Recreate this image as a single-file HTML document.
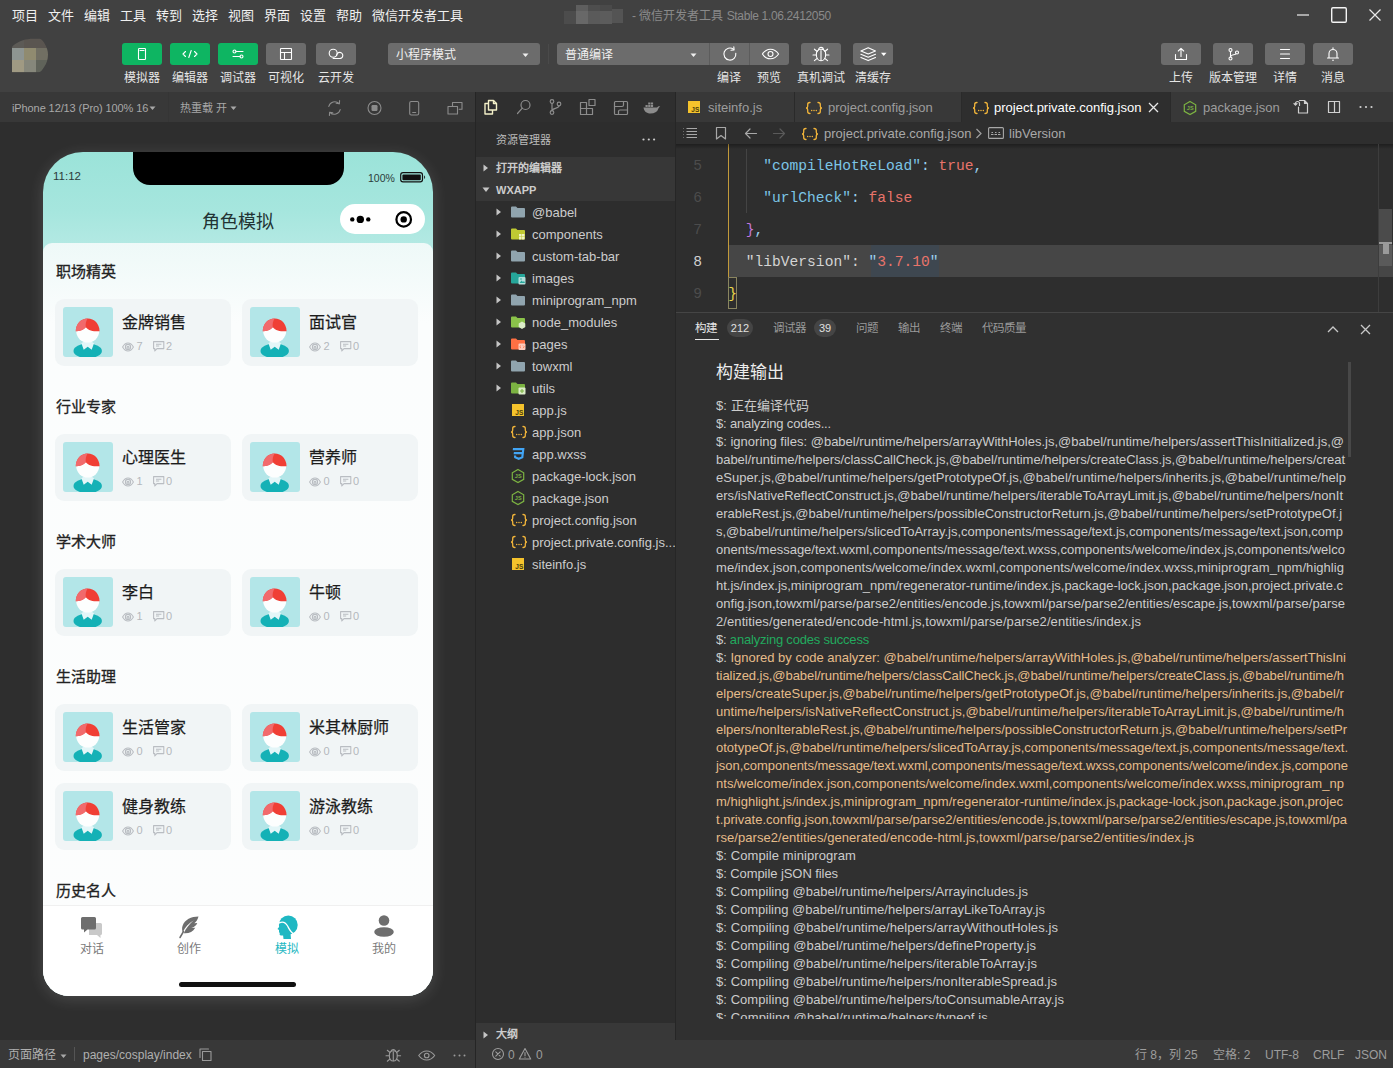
<!DOCTYPE html><html lang="zh-CN"><head><meta charset="utf-8"><title>wx</title><style>
*{box-sizing:border-box;margin:0;padding:0}
svg{display:block}
html,body{width:1393px;height:1068px;overflow:hidden;background:#2e2e2e;font-family:"Liberation Sans",sans-serif;color:#ccc;font-size:12px}
.abs{position:absolute}
.nw{white-space:nowrap}
#menubar{left:0;top:0;width:1393px;height:30px;background:#414141}
#toolbar{left:0;top:30px;width:1393px;height:62px;background:#414141}
.menu{position:absolute;top:8px;font-size:13px;color:#f0f0f0;white-space:nowrap;line-height:16px}
.tbtn{position:absolute;top:43px;width:40px;height:22px;border-radius:3px;background:#6c6c6c}
.tbtn.g{background:#0eb562}
.tbtn svg{position:absolute;left:0;top:0}
.tlab{position:absolute;top:71px;font-size:12px;color:#e6e6e6;white-space:nowrap;line-height:15px;text-align:center;width:80px}
.dd{position:absolute;top:43px;height:22px;background:#6c6c6c;border-radius:3px;color:#f0f0f0;font-size:12px;line-height:24px;padding-left:8px;white-space:nowrap}
#sim{left:0;top:92px;width:475px;height:948px;background:#2e2e2e}
#simbar{left:0;top:92px;width:475px;height:30px;background:#383838}
#simbot{left:0;top:1040px;width:475px;height:28px;background:#383838}
#vdiv{left:475px;top:92px;width:1px;height:976px;background:#252525}
#actbar{left:476px;top:92px;width:200px;height:30px;background:#2f2f2f}
#explorer{left:476px;top:122px;width:199px;height:918px;background:#2d2d2d;overflow:hidden}
#edtabs{left:676px;top:92px;width:717px;height:30px;background:#383838}
#crumbs{left:676px;top:122px;width:717px;height:22px;background:#2e2e2e}
#code{left:676px;top:144px;width:717px;height:168px;background:#2e2e2e;overflow:hidden}
#panel{left:676px;top:310px;width:717px;height:730px}
#panelbg{left:676px;top:312px;width:717px;height:728px;background:#303030;border-top:1px solid #454545}
#status{left:476px;top:1040px;width:917px;height:28px;background:#393939}
.row{position:absolute;left:0;width:200px;height:22px;line-height:22px;font-size:13px;color:#cccccc;white-space:nowrap}
.row .tw{position:absolute;top:7px}
.row .ic{position:absolute;top:3px}
.row .lb{position:absolute;left:56px;top:1px}
.sec{position:absolute;left:0;width:199px;height:22px;background:#373737;line-height:22px;font-size:11px;font-weight:bold;color:#cccccc}
.tab{position:absolute;top:0;height:30px;line-height:32px;font-size:13px;color:#9d9d9d;white-space:nowrap;border-right:1px solid #2a2a2a}
.tab.act{background:#2e2e2e;color:#ffffff}
.cl{position:absolute;left:0;width:717px;height:32px;line-height:32px;font-family:"Liberation Mono",monospace;font-size:14.6px;white-space:pre;color:#cfcfcf}
.ln{position:absolute;left:0;width:26px;text-align:right;color:#4c4c4c;font-family:"Liberation Mono",monospace;font-size:14.6px;line-height:32px}
.k{color:#7cc5e6}.s{color:#e8746b}.p{color:#9ad0ec}.b2{color:#c678dd}.b1{color:#ead84a}
.ptab{position:absolute;top:11px;font-size:11.5px;line-height:14px;color:#9a9a9a;white-space:nowrap}
.badge{position:absolute;top:9px;height:18px;border-radius:9px;background:#454545;color:#e0e0e0;font-size:11px;line-height:18px;text-align:center}
.log{position:absolute;left:40px;height:18px;line-height:18px;font-size:13px;color:#cccccc;white-space:nowrap}
.log.o{color:#e6bc8a}
.sb{position:absolute;top:8px;font-size:12px;line-height:14px;color:#9d9d9d;white-space:nowrap}
/* phone */
#phone{left:43px;top:152px;width:390px;height:844px;border-radius:40px 40px 26px 26px;overflow:hidden;background:linear-gradient(180deg,#9be3d9 0px,#a6e6de 60px,#b3e9e3 92px,#b3e9e3 100px);box-shadow:0 3px 16px rgba(255,255,255,.14)}
#notch{left:89.5px;top:0;width:211px;height:33px;background:#000;border-radius:0 0 17px 17px}
#content{left:0;top:91px;width:390px;height:753px;border-radius:9px 9px 0 0;background:linear-gradient(180deg,#eef9f8 0px,#fbfdfd 80px,#fcfdfd 100%)}
.st{position:absolute;left:13px;font-size:15px;line-height:18px;color:#222;font-weight:500;-webkit-text-stroke:0.3px #222;white-space:nowrap}
.card{position:absolute;width:176px;height:67px;border-radius:9px;background:#f1f5f6}
.card .av{position:absolute;left:8px;top:8px;width:50px;height:50px;border-radius:3px;background:#b3e6e8;overflow:hidden}
.card .nm{position:absolute;left:67px;top:13px;font-size:16px;line-height:22px;color:#1c1c1c;font-weight:500;-webkit-text-stroke:0.25px #1c1c1c;white-space:nowrap}
.card .stt{position:absolute;left:67px;top:40px;font-size:11px;line-height:14px;color:#b4b8bd;white-space:nowrap}
#tabbar{left:0;top:753px;width:390px;height:91px;background:#fff;border-top:1px solid #f0f0f0}
.tbl{position:absolute;top:35px;width:60px;text-align:center;font-size:12px;line-height:16px;color:#7a7a7a}
</style></head><body>
<div id="menubar" class="abs"><div class="menu" style="left:12px">项目</div><div class="menu" style="left:48px">文件</div><div class="menu" style="left:84px">编辑</div><div class="menu" style="left:120px">工具</div><div class="menu" style="left:156px">转到</div><div class="menu" style="left:192px">选择</div><div class="menu" style="left:228px">视图</div><div class="menu" style="left:264px">界面</div><div class="menu" style="left:300px">设置</div><div class="menu" style="left:336px">帮助</div><div class="menu" style="left:372px">微信开发者工具</div>
<svg width="64" height="22" style="position:absolute;left:562px;top:3px;filter:blur(0.6px)"><rect x="2" y="8" width="12" height="13" fill="#4c4c4c"/><rect x="14" y="2" width="12" height="19" fill="#5e5e5e"/><rect x="14" y="8" width="12" height="13" fill="#686868"/><rect x="26" y="2" width="12" height="7" fill="#4e4e4e"/><rect x="26" y="8" width="12" height="13" fill="#5a5a5a"/><rect x="38" y="2" width="12" height="7" fill="#4a4a4a"/><rect x="38" y="8" width="12" height="13" fill="#5c5c5c"/><rect x="50" y="6" width="11" height="14" fill="#545454"/></svg>
<div class="menu" style="left:632px;color:#8a8a8a;font-size:12px">- 微信开发者工具 <span style="letter-spacing:-0.35px">Stable 1.06.2412050</span></div>
<svg width="100" height="30" style="position:absolute;left:1290px;top:0"><path d="M7 15h12" stroke="#a8a8a8" stroke-width="2"/><rect x="41.700" y="7.700" width="14.600" height="14.600" rx="1.200" fill="none" stroke="#f4f4f4" stroke-width="1.400"/><path d="M79.500 9.500l11 11M90.500 9.500l-11 11" stroke="#e8e8e8" stroke-width="1.200"/></svg>
</div>
<div id="toolbar" class="abs"></div>
<svg width="40" height="36" style="position:absolute;left:11px;top:38px;filter:blur(0.4px)"><defs><clipPath id="avc"><path d="M1 9.500c0-1.500 5-5.500 11-7.200 3-1 6-1.500 11-1.500h5.500c2 0 4.500 3 6 6.500 1.300 3 2.500 5 2.500 9.500 0 5-1.500 9-4 12.500-1.500 2.500-3.500 5-5 5h-27z"/></clipPath></defs><g clip-path="url(#avc)"><rect x="0" y="0" width="13" height="10" fill="#5c5a56"/><rect x="13" y="0" width="27" height="10" fill="#5a5550"/><rect x="1" y="10" width="12" height="12" fill="#8e9592"/><rect x="13" y="10" width="12" height="12" fill="#908b70"/><rect x="25" y="10" width="15" height="12" fill="#716f63"/><rect x="1" y="22" width="12" height="12.500" fill="#a09a83"/><rect x="13" y="22" width="12" height="12.500" fill="#86877b"/><rect x="25" y="22" width="15" height="12.500" fill="#60635a"/></g></svg>
<div class="tbtn g" style="left:122px"><svg width="40" height="22" viewBox="0 0 40 22" style=""><rect x="16.5" y="5.5" width="7" height="11" rx="0.8" fill="none" stroke="#fff" stroke-width="1.1" stroke-linecap="round" stroke-linejoin="round"/><path d="M18 7.5h4" fill="none" stroke="#fff" stroke-width="1.1" stroke-linecap="round" stroke-linejoin="round"/></svg></div><div class="tlab" style="left:102px">模拟器</div>
<div class="tbtn g" style="left:170px"><svg width="40" height="22" viewBox="0 0 40 22" style=""><path d="M15.5 8.5l-2.5 2.5 2.5 2.5M24.5 8.5l2.5 2.5-2.5 2.5M21.2 7.5l-2.4 7" fill="none" stroke="#fff" stroke-width="1.1" stroke-linecap="round" stroke-linejoin="round"/></svg></div><div class="tlab" style="left:150px">编辑器</div>
<div class="tbtn g" style="left:218px"><svg width="40" height="22" viewBox="0 0 40 22" style=""><path d="M18 8.5h7M15 13.5h7" fill="none" stroke="#fff" stroke-width="1.1" stroke-linecap="round" stroke-linejoin="round"/><circle cx="16.5" cy="8.5" r="1.5" fill="none" stroke="#fff" stroke-width="1.1" stroke-linecap="round" stroke-linejoin="round"/><circle cx="23.5" cy="13.5" r="1.5" fill="none" stroke="#fff" stroke-width="1.1" stroke-linecap="round" stroke-linejoin="round"/></svg></div><div class="tlab" style="left:198px">调试器</div>
<div class="tbtn" style="left:266px"><svg width="40" height="22" viewBox="0 0 40 22" style=""><rect x="14.5" y="5.5" width="11" height="11" rx="0.5" fill="none" stroke="#fff" stroke-width="1.1" stroke-linecap="round" stroke-linejoin="round"/><path d="M14.5 9.5h11M18.5 9.5v7" fill="none" stroke="#fff" stroke-width="1.1" stroke-linecap="round" stroke-linejoin="round"/></svg></div><div class="tlab" style="left:246px">可视化</div>
<div class="tbtn" style="left:316px"><svg width="40" height="22" viewBox="0 0 40 22" style=""><circle cx="17.200" cy="10.300" r="4" fill="none" stroke="#fff" stroke-width="1.1" stroke-linecap="round" stroke-linejoin="round"/><path d="M20.600 12.400a3.100 3.100 0 1 1 2.500 3.100h-6" fill="none" stroke="#fff" stroke-width="1.1" stroke-linecap="round" stroke-linejoin="round"/></svg></div><div class="tlab" style="left:296px">云开发</div>
<div class="dd" style="left:388px;width:152px">小程序模式<svg width="7" height="5" style="position:absolute;left:134px;top:10px"><path d="M0.500 0.500h6l-3 3.500z" fill="#eee"/></svg></div>
<div class="abs" style="left:548px;top:44px;width:1px;height:20px;background:#4a4a4a"></div>
<div class="dd" style="left:557px;width:232px;">普通编译<svg width="7" height="5" style="position:absolute;left:133px;top:10px"><path d="M0.500 0.500h6l-3 3.500z" fill="#eee"/></svg><div class="abs" style="left:152px;top:0;width:1px;height:22px;background:#5c5c5c"></div><div class="abs" style="left:192px;top:0;width:1px;height:22px;background:#5c5c5c"></div><svg width="40" height="22" viewBox="0 0 40 22" style="position:absolute;left:153px;top:0"><path d="M25.800 10.200a6 6 0 1 1-2.300-3.900" fill="none" stroke="#fff" stroke-width="1.1" stroke-linecap="round" stroke-linejoin="round"/><path d="M23.800 3.800l.3 3.100-3.100.3" fill="none" stroke="#fff" stroke-width="1.1" stroke-linecap="round" stroke-linejoin="round"/></svg><svg width="40" height="22" viewBox="0 0 40 22" style="position:absolute;left:193px;top:0"><path d="M12.400 11c2.200-3.200 4.900-4.800 8.100-4.800s5.900 1.600 8.100 4.800c-2.200 3.200-4.900 4.800-8.100 4.800s-5.900-1.600-8.100-4.800z" fill="none" stroke="#fff" stroke-width="1.1" stroke-linecap="round" stroke-linejoin="round"/><circle cx="20.500" cy="11" r="2.500" fill="none" stroke="#fff" stroke-width="1.1" stroke-linecap="round" stroke-linejoin="round"/></svg></div>
<div class="tlab" style="left:689px">编译</div><div class="tlab" style="left:729px">预览</div>
<div class="tbtn" style="left:801px"><svg width="40" height="22" viewBox="0 0 40 22" style=""><path d="M15.300 11.500c0-3.200 2-5.200 4.700-5.200s4.700 2 4.700 5.200c0 3.600-2 6.300-4.700 6.300s-4.700-2.700-4.700-6.300z" fill="none" stroke="#fff" stroke-width="1.1" stroke-linecap="round" stroke-linejoin="round"/><path d="M20 7.500v10M15.300 12h-3.300M24.700 12h3.300M16.200 8.500l-2.800-2.300M23.800 8.500l2.800-2.300M16.200 15.300l-2.800 2.400M23.800 15.300l2.800 2.400M17.600 6.800a2.400 2.400 0 0 1 4.800 0" fill="none" stroke="#fff" stroke-width="1.1" stroke-linecap="round" stroke-linejoin="round"/></svg></div><div class="tlab" style="left:781px">真机调试</div>
<div class="tbtn" style="left:853px"><svg width="40" height="22" viewBox="0 0 40 22" style=""><path d="M15.200 4.800l7.300 3.100-7.300 3.100-7.300-3.100z M7.900 11.200l7.300 3.100 7.300-3.100 M7.900 14.500l7.300 3.100 7.300-3.100" fill="none" stroke="#fff" stroke-width="1.1" stroke-linecap="round" stroke-linejoin="round"/><path d="M28 9.800h5.500l-2.750 3.200z" fill="#fff"/></svg></div><div class="tlab" style="left:833px">清缓存</div>
<div class="tbtn" style="left:1161px"><svg width="40" height="22" viewBox="0 0 40 22" style=""><path d="M14.500 11.500v5h11v-5M20 13.500v-8M17.300 8l2.700-2.700 2.700 2.700" fill="none" stroke="#fff" stroke-width="1.1" stroke-linecap="round" stroke-linejoin="round"/></svg></div><div class="tlab" style="left:1141px">上传</div>
<div class="tbtn" style="left:1213px"><svg width="40" height="22" viewBox="0 0 40 22" style=""><circle cx="17.500" cy="7" r="1.500" fill="none" stroke="#fff" stroke-width="1.1" stroke-linecap="round" stroke-linejoin="round"/><circle cx="17.500" cy="15.500" r="1.500" fill="none" stroke="#fff" stroke-width="1.1" stroke-linecap="round" stroke-linejoin="round"/><circle cx="24" cy="9.500" r="1.500" fill="none" stroke="#fff" stroke-width="1.1" stroke-linecap="round" stroke-linejoin="round"/><path d="M17.500 8.500v5.500M17.500 14c0-3 5-1.500 5.500-3.300" fill="none" stroke="#fff" stroke-width="1.1" stroke-linecap="round" stroke-linejoin="round"/></svg></div><div class="tlab" style="left:1193px">版本管理</div>
<div class="tbtn" style="left:1265px"><svg width="40" height="22" viewBox="0 0 40 22" style=""><path d="M15.500 6.500h9M15.500 11h9M15.500 15.500h9" fill="none" stroke="#fff" stroke-width="1.1" stroke-linecap="round" stroke-linejoin="round"/></svg></div><div class="tlab" style="left:1245px">详情</div>
<div class="tbtn" style="left:1313px"><svg width="40" height="22" viewBox="0 0 40 22" style=""><path d="M14.500 15h11M16 15v-4.500a4 4 0 0 1 8 0v4.500M20 4.700v1.500" fill="none" stroke="#fff" stroke-width="1.1" stroke-linecap="round" stroke-linejoin="round"/><circle cx="20" cy="17.200" r="0.800" fill="#fff"/></svg></div><div class="tlab" style="left:1293px">消息</div>
<div id="sim" class="abs"></div><div id="simbar" class="abs">
<div class="abs nw" style="left:12px;top:9px;font-size:11px;line-height:14px;color:#a8a8a8;letter-spacing:-0.1px">iPhone 12/13 (Pro) 100% 16</div><svg width="7" height="5" style="position:absolute;left:149px;top:14px"><path d="M0.500 0.500h6l-3 3.500z" fill="#a8a8a8"/></svg>
<div class="abs" style="left:168px;top:0;width:1px;height:30px;background:#353535"></div>
<div class="abs nw" style="left:180px;top:9px;font-size:11px;line-height:14px;color:#a8a8a8">热重载 开</div><svg width="7" height="5" style="position:absolute;left:230px;top:14px"><path d="M0.500 0.500h6l-3 3.500z" fill="#a8a8a8"/></svg>
<svg width="160" height="30" style="position:absolute;left:315px;top:0"><path d="M13.800 14.500a6 6 0 0 1 10.300-2.800M25.200 17.500a6 6 0 0 1-10.300 2.800" fill="none" stroke="#8c8c8c" stroke-width="1.100" stroke-linecap="round" stroke-linejoin="round"/><path d="M24.600 8.600l-.3 3.200-3.100-.5M14.400 23.400l.3-3.200 3.100.5" fill="none" stroke="#8c8c8c" stroke-width="1.100" stroke-linecap="round" stroke-linejoin="round"/><circle cx="59.500" cy="16" r="6.500" fill="none" stroke="#8c8c8c" stroke-width="1.100" stroke-linecap="round" stroke-linejoin="round"/><rect x="56.500" y="13" width="6" height="6" rx="1.200" fill="#8c8c8c"/><rect x="94.700" y="9.500" width="9" height="13.500" rx="1.500" fill="none" stroke="#8c8c8c" stroke-width="1.100" stroke-linecap="round" stroke-linejoin="round"/><path d="M97.700 20.500h3" fill="none" stroke="#8c8c8c" stroke-width="1.100" stroke-linecap="round" stroke-linejoin="round"/><path d="M137.500 13.800v-3.300h9.500v6.800h-2.800M133 14.500h9.500v7.500h-9.500z" fill="none" stroke="#8c8c8c" stroke-width="1.100" stroke-linecap="round" stroke-linejoin="round"/></svg>
</div>
<div id="simbot" class="abs">
<div class="sb" style="left:8px;color:#b0b0b0">页面路径</div><svg width="7" height="5" style="position:absolute;left:60px;top:14px"><path d="M0.500 0.500h6l-3 3.500z" fill="#a8a8a8"/></svg><div style="display:none"></div><div class="abs" style="left:74px;top:7px;width:1px;height:14px;background:#555"></div><div class="sb" style="left:83px;color:#b0b0b0">pages/cosplay/index</div>
<svg width="280" height="28" style="position:absolute;left:195px;top:0"><path d="M7.500 11.500h8.500v9h-8.500z M5 17.500v-8.500h8.500" fill="none" stroke="#9a9a9a" stroke-width="1.100" stroke-linecap="round" stroke-linejoin="round"/><path d="M194.300 15.500c0-3 1.700-4.800 4-4.800s4 1.800 4 4.800c0 3.200-1.700 5.500-4 5.500s-4-2.300-4-5.500z" fill="none" stroke="#9a9a9a" stroke-width="1.100" stroke-linecap="round" stroke-linejoin="round"/><path d="M198.300 11.800v9M194.300 15.800h-3.300M202.300 15.800h3.300M195 12.500l-2.700-2.200M201.600 12.500l2.700-2.200M195 19l-2.700 2.200M201.600 19l2.700 2.200M196.200 11a2.200 2.200 0 0 1 4.200 0" fill="none" stroke="#9a9a9a" stroke-width="1.100" stroke-linecap="round" stroke-linejoin="round"/><path d="M223.700 15.500c2.200-3 4.900-4.500 8-4.500s5.800 1.500 8 4.500c-2.200 3-4.900 4.500-8 4.500s-5.800-1.500-8-4.500z" fill="none" stroke="#9a9a9a" stroke-width="1.100" stroke-linecap="round" stroke-linejoin="round"/><circle cx="231.700" cy="15.500" r="2.300" fill="none" stroke="#9a9a9a" stroke-width="1.100" stroke-linecap="round" stroke-linejoin="round"/><circle cx="259.500" cy="15.500" r="1" fill="#9a9a9a"/><circle cx="264.500" cy="15.500" r="1" fill="#9a9a9a"/><circle cx="269.500" cy="15.500" r="1" fill="#9a9a9a"/></svg>
</div>
<div id="vdiv" class="abs"></div>
<div id="phone" class="abs"><div id="notch" class="abs"></div>
<div class="abs nw" style="left:10px;top:17px;font-size:11.5px;line-height:15px;color:#2b3b3a">11:12</div>
<div class="abs nw" style="left:325px;top:19.5px;font-size:10.5px;line-height:13px;color:#2b3b3a">100%</div>
<svg width="28" height="12" style="position:absolute;left:357px;top:20px"><rect x="0.700" y="0.700" width="21.800" height="9.200" rx="2.300" fill="none" stroke="#111" stroke-width="1.200"/><rect x="2.400" y="2.400" width="18.400" height="5.800" rx="1" fill="#111"/><path d="M24.200 3.600v3.400c1.200-.3 1.200-3.100 0-3.400z" fill="#111"/></svg>
<div class="abs nw" style="left:0;top:58px;width:390px;text-align:center;font-size:18px;line-height:24px;color:#233">角色模拟</div>
<div class="abs" style="left:297px;top:52px;width:85px;height:30px;border-radius:15px;background:#fff"><svg width="85" height="30" style="position:absolute;left:0;top:0"><circle cx="12.300" cy="15.400" r="2.200" fill="#000"/><circle cx="20.300" cy="15.400" r="3.700" fill="#000"/><circle cx="28.300" cy="15.400" r="2.200" fill="#000"/><circle cx="63.700" cy="15.400" r="7.300" fill="none" stroke="#000" stroke-width="2.200"/><circle cx="63.700" cy="15.400" r="3.200" fill="#000"/></svg></div>
<div id="content" class="abs">
<div class="st" style="top:20px">职场精英</div>
<div class="card" style="left:12px;top:56px"><div class="av"><svg width="50" height="50" viewBox="0 0 50 50"><ellipse cx="24.700" cy="43.900" rx="14.200" ry="7.300" fill="#14b1b6"/><path d="M18.400 36.200l2.300 6.500 4-2.900 4 2.900 2.300-6.500-2.600-1.700h-7.400z" fill="#e4f6f8"/><circle cx="24.700" cy="24" r="11.500" fill="#fdfefe"/><path d="M12.800 24.300c0-7.300 5.300-12.700 11.900-12.700s11.900 5.400 11.900 12.700c-5.500.3-11-.6-13.800-4.100-2.200 2.700-6 4.100-10 4.100z" fill="#f03f35"/><path d="M12.800 24.300c0-7.300 5.300-12.700 11.900-12.700-1.800 2.800-2.400 5.700-1.900 8.600-2.200 2.700-6 4.100-10 4.100z" fill="#f16a6c"/></svg></div><div class="nm">金牌销售</div><div class="stt"><svg width="12" height="10" style="position:absolute;left:0;top:2.500px"><path d="M0.600 5c1.500-2.700 3.300-4 5.400-4s3.900 1.300 5.400 4c-1.500 2.700-3.300 4-5.400 4s-3.900-1.300-5.400-4z" fill="none" stroke="#b9bdc2" stroke-width="1.100" stroke-linejoin="round"/><circle cx="6" cy="5" r="2.600" fill="none" stroke="#b9bdc2" stroke-width="1.100" stroke-linejoin="round"/><circle cx="6" cy="5.200" r="1" fill="none" stroke="#b9bdc2" stroke-width="1.100" stroke-linejoin="round"/></svg><span style="position:absolute;left:14.500px;top:0">7</span><svg width="12" height="11" style="position:absolute;left:30.500px;top:2px"><path d="M0.600 0.600h10.200v7h-6.800l-2.200 2.400v-2.400h-1.200z" fill="none" stroke="#b9bdc2" stroke-width="1.100" stroke-linejoin="round"/><path d="M3 3.200h5.400M3 5h3.200" fill="none" stroke="#b9bdc2" stroke-width="1.100" stroke-linejoin="round"/></svg><span style="position:absolute;left:44px;top:0">2</span></div></div>
<div class="card" style="left:199px;top:56px"><div class="av"><svg width="50" height="50" viewBox="0 0 50 50"><ellipse cx="24.700" cy="43.900" rx="14.200" ry="7.300" fill="#14b1b6"/><path d="M18.400 36.200l2.300 6.500 4-2.900 4 2.900 2.300-6.500-2.600-1.700h-7.400z" fill="#e4f6f8"/><circle cx="24.700" cy="24" r="11.500" fill="#fdfefe"/><path d="M12.800 24.300c0-7.300 5.300-12.700 11.900-12.700s11.900 5.400 11.900 12.700c-5.500.3-11-.6-13.800-4.100-2.200 2.700-6 4.100-10 4.100z" fill="#f03f35"/><path d="M12.800 24.300c0-7.300 5.300-12.700 11.900-12.700-1.800 2.800-2.400 5.700-1.900 8.600-2.200 2.700-6 4.100-10 4.100z" fill="#f16a6c"/></svg></div><div class="nm">面试官</div><div class="stt"><svg width="12" height="10" style="position:absolute;left:0;top:2.500px"><path d="M0.600 5c1.500-2.700 3.300-4 5.400-4s3.900 1.300 5.400 4c-1.500 2.700-3.300 4-5.400 4s-3.900-1.300-5.400-4z" fill="none" stroke="#b9bdc2" stroke-width="1.100" stroke-linejoin="round"/><circle cx="6" cy="5" r="2.600" fill="none" stroke="#b9bdc2" stroke-width="1.100" stroke-linejoin="round"/><circle cx="6" cy="5.200" r="1" fill="none" stroke="#b9bdc2" stroke-width="1.100" stroke-linejoin="round"/></svg><span style="position:absolute;left:14.500px;top:0">2</span><svg width="12" height="11" style="position:absolute;left:30.500px;top:2px"><path d="M0.600 0.600h10.200v7h-6.800l-2.200 2.400v-2.400h-1.200z" fill="none" stroke="#b9bdc2" stroke-width="1.100" stroke-linejoin="round"/><path d="M3 3.200h5.400M3 5h3.200" fill="none" stroke="#b9bdc2" stroke-width="1.100" stroke-linejoin="round"/></svg><span style="position:absolute;left:44px;top:0">0</span></div></div>
<div class="st" style="top:155px">行业专家</div>
<div class="card" style="left:12px;top:191px"><div class="av"><svg width="50" height="50" viewBox="0 0 50 50"><ellipse cx="24.700" cy="43.900" rx="14.200" ry="7.300" fill="#14b1b6"/><path d="M18.400 36.200l2.300 6.500 4-2.900 4 2.900 2.300-6.500-2.600-1.700h-7.400z" fill="#e4f6f8"/><circle cx="24.700" cy="24" r="11.500" fill="#fdfefe"/><path d="M12.800 24.300c0-7.300 5.300-12.700 11.900-12.700s11.900 5.400 11.900 12.700c-5.500.3-11-.6-13.800-4.100-2.200 2.700-6 4.100-10 4.100z" fill="#f03f35"/><path d="M12.800 24.300c0-7.300 5.300-12.700 11.900-12.700-1.800 2.800-2.400 5.700-1.900 8.600-2.200 2.700-6 4.100-10 4.100z" fill="#f16a6c"/></svg></div><div class="nm">心理医生</div><div class="stt"><svg width="12" height="10" style="position:absolute;left:0;top:2.500px"><path d="M0.600 5c1.500-2.700 3.300-4 5.400-4s3.900 1.300 5.400 4c-1.500 2.700-3.300 4-5.400 4s-3.900-1.300-5.400-4z" fill="none" stroke="#b9bdc2" stroke-width="1.100" stroke-linejoin="round"/><circle cx="6" cy="5" r="2.600" fill="none" stroke="#b9bdc2" stroke-width="1.100" stroke-linejoin="round"/><circle cx="6" cy="5.200" r="1" fill="none" stroke="#b9bdc2" stroke-width="1.100" stroke-linejoin="round"/></svg><span style="position:absolute;left:14.500px;top:0">1</span><svg width="12" height="11" style="position:absolute;left:30.500px;top:2px"><path d="M0.600 0.600h10.200v7h-6.800l-2.200 2.400v-2.400h-1.200z" fill="none" stroke="#b9bdc2" stroke-width="1.100" stroke-linejoin="round"/><path d="M3 3.200h5.400M3 5h3.200" fill="none" stroke="#b9bdc2" stroke-width="1.100" stroke-linejoin="round"/></svg><span style="position:absolute;left:44px;top:0">0</span></div></div>
<div class="card" style="left:199px;top:191px"><div class="av"><svg width="50" height="50" viewBox="0 0 50 50"><ellipse cx="24.700" cy="43.900" rx="14.200" ry="7.300" fill="#14b1b6"/><path d="M18.400 36.200l2.300 6.500 4-2.900 4 2.900 2.300-6.500-2.600-1.700h-7.400z" fill="#e4f6f8"/><circle cx="24.700" cy="24" r="11.500" fill="#fdfefe"/><path d="M12.800 24.300c0-7.300 5.300-12.700 11.900-12.700s11.900 5.400 11.900 12.700c-5.500.3-11-.6-13.800-4.100-2.200 2.700-6 4.100-10 4.100z" fill="#f03f35"/><path d="M12.800 24.300c0-7.300 5.300-12.700 11.900-12.700-1.800 2.800-2.400 5.700-1.900 8.600-2.200 2.700-6 4.100-10 4.100z" fill="#f16a6c"/></svg></div><div class="nm">营养师</div><div class="stt"><svg width="12" height="10" style="position:absolute;left:0;top:2.500px"><path d="M0.600 5c1.500-2.700 3.300-4 5.400-4s3.900 1.300 5.400 4c-1.500 2.700-3.300 4-5.400 4s-3.900-1.300-5.400-4z" fill="none" stroke="#b9bdc2" stroke-width="1.100" stroke-linejoin="round"/><circle cx="6" cy="5" r="2.600" fill="none" stroke="#b9bdc2" stroke-width="1.100" stroke-linejoin="round"/><circle cx="6" cy="5.200" r="1" fill="none" stroke="#b9bdc2" stroke-width="1.100" stroke-linejoin="round"/></svg><span style="position:absolute;left:14.500px;top:0">0</span><svg width="12" height="11" style="position:absolute;left:30.500px;top:2px"><path d="M0.600 0.600h10.200v7h-6.800l-2.200 2.400v-2.400h-1.200z" fill="none" stroke="#b9bdc2" stroke-width="1.100" stroke-linejoin="round"/><path d="M3 3.200h5.400M3 5h3.200" fill="none" stroke="#b9bdc2" stroke-width="1.100" stroke-linejoin="round"/></svg><span style="position:absolute;left:44px;top:0">0</span></div></div>
<div class="st" style="top:290px">学术大师</div>
<div class="card" style="left:12px;top:326px"><div class="av"><svg width="50" height="50" viewBox="0 0 50 50"><ellipse cx="24.700" cy="43.900" rx="14.200" ry="7.300" fill="#14b1b6"/><path d="M18.400 36.200l2.300 6.500 4-2.900 4 2.900 2.300-6.500-2.600-1.700h-7.400z" fill="#e4f6f8"/><circle cx="24.700" cy="24" r="11.500" fill="#fdfefe"/><path d="M12.800 24.300c0-7.300 5.300-12.700 11.900-12.700s11.900 5.400 11.900 12.700c-5.500.3-11-.6-13.800-4.100-2.200 2.700-6 4.100-10 4.100z" fill="#f03f35"/><path d="M12.800 24.300c0-7.300 5.300-12.700 11.900-12.700-1.800 2.800-2.400 5.700-1.900 8.600-2.200 2.700-6 4.100-10 4.100z" fill="#f16a6c"/></svg></div><div class="nm">李白</div><div class="stt"><svg width="12" height="10" style="position:absolute;left:0;top:2.500px"><path d="M0.600 5c1.500-2.700 3.300-4 5.400-4s3.900 1.300 5.400 4c-1.500 2.700-3.300 4-5.400 4s-3.900-1.300-5.400-4z" fill="none" stroke="#b9bdc2" stroke-width="1.100" stroke-linejoin="round"/><circle cx="6" cy="5" r="2.600" fill="none" stroke="#b9bdc2" stroke-width="1.100" stroke-linejoin="round"/><circle cx="6" cy="5.200" r="1" fill="none" stroke="#b9bdc2" stroke-width="1.100" stroke-linejoin="round"/></svg><span style="position:absolute;left:14.500px;top:0">1</span><svg width="12" height="11" style="position:absolute;left:30.500px;top:2px"><path d="M0.600 0.600h10.200v7h-6.800l-2.200 2.400v-2.400h-1.200z" fill="none" stroke="#b9bdc2" stroke-width="1.100" stroke-linejoin="round"/><path d="M3 3.200h5.400M3 5h3.200" fill="none" stroke="#b9bdc2" stroke-width="1.100" stroke-linejoin="round"/></svg><span style="position:absolute;left:44px;top:0">0</span></div></div>
<div class="card" style="left:199px;top:326px"><div class="av"><svg width="50" height="50" viewBox="0 0 50 50"><ellipse cx="24.700" cy="43.900" rx="14.200" ry="7.300" fill="#14b1b6"/><path d="M18.400 36.200l2.300 6.500 4-2.900 4 2.900 2.300-6.500-2.600-1.700h-7.400z" fill="#e4f6f8"/><circle cx="24.700" cy="24" r="11.500" fill="#fdfefe"/><path d="M12.800 24.300c0-7.300 5.300-12.700 11.900-12.700s11.900 5.400 11.900 12.700c-5.500.3-11-.6-13.800-4.100-2.200 2.700-6 4.100-10 4.100z" fill="#f03f35"/><path d="M12.800 24.300c0-7.300 5.300-12.700 11.900-12.700-1.800 2.800-2.400 5.700-1.900 8.600-2.200 2.700-6 4.100-10 4.100z" fill="#f16a6c"/></svg></div><div class="nm">牛顿</div><div class="stt"><svg width="12" height="10" style="position:absolute;left:0;top:2.500px"><path d="M0.600 5c1.500-2.700 3.300-4 5.400-4s3.900 1.300 5.400 4c-1.500 2.700-3.300 4-5.400 4s-3.900-1.300-5.400-4z" fill="none" stroke="#b9bdc2" stroke-width="1.100" stroke-linejoin="round"/><circle cx="6" cy="5" r="2.600" fill="none" stroke="#b9bdc2" stroke-width="1.100" stroke-linejoin="round"/><circle cx="6" cy="5.200" r="1" fill="none" stroke="#b9bdc2" stroke-width="1.100" stroke-linejoin="round"/></svg><span style="position:absolute;left:14.500px;top:0">0</span><svg width="12" height="11" style="position:absolute;left:30.500px;top:2px"><path d="M0.600 0.600h10.200v7h-6.800l-2.200 2.400v-2.400h-1.200z" fill="none" stroke="#b9bdc2" stroke-width="1.100" stroke-linejoin="round"/><path d="M3 3.200h5.400M3 5h3.200" fill="none" stroke="#b9bdc2" stroke-width="1.100" stroke-linejoin="round"/></svg><span style="position:absolute;left:44px;top:0">0</span></div></div>
<div class="st" style="top:425px">生活助理</div>
<div class="card" style="left:12px;top:461px"><div class="av"><svg width="50" height="50" viewBox="0 0 50 50"><ellipse cx="24.700" cy="43.900" rx="14.200" ry="7.300" fill="#14b1b6"/><path d="M18.400 36.200l2.300 6.500 4-2.900 4 2.900 2.300-6.500-2.600-1.700h-7.400z" fill="#e4f6f8"/><circle cx="24.700" cy="24" r="11.500" fill="#fdfefe"/><path d="M12.800 24.300c0-7.300 5.300-12.700 11.900-12.700s11.900 5.400 11.900 12.700c-5.500.3-11-.6-13.800-4.100-2.200 2.700-6 4.100-10 4.100z" fill="#f03f35"/><path d="M12.800 24.300c0-7.300 5.300-12.700 11.900-12.700-1.800 2.800-2.400 5.700-1.900 8.600-2.200 2.700-6 4.100-10 4.100z" fill="#f16a6c"/></svg></div><div class="nm">生活管家</div><div class="stt"><svg width="12" height="10" style="position:absolute;left:0;top:2.500px"><path d="M0.600 5c1.500-2.700 3.300-4 5.400-4s3.900 1.300 5.400 4c-1.500 2.700-3.300 4-5.400 4s-3.900-1.300-5.400-4z" fill="none" stroke="#b9bdc2" stroke-width="1.100" stroke-linejoin="round"/><circle cx="6" cy="5" r="2.600" fill="none" stroke="#b9bdc2" stroke-width="1.100" stroke-linejoin="round"/><circle cx="6" cy="5.200" r="1" fill="none" stroke="#b9bdc2" stroke-width="1.100" stroke-linejoin="round"/></svg><span style="position:absolute;left:14.500px;top:0">0</span><svg width="12" height="11" style="position:absolute;left:30.500px;top:2px"><path d="M0.600 0.600h10.200v7h-6.800l-2.200 2.400v-2.400h-1.200z" fill="none" stroke="#b9bdc2" stroke-width="1.100" stroke-linejoin="round"/><path d="M3 3.200h5.400M3 5h3.200" fill="none" stroke="#b9bdc2" stroke-width="1.100" stroke-linejoin="round"/></svg><span style="position:absolute;left:44px;top:0">0</span></div></div>
<div class="card" style="left:199px;top:461px"><div class="av"><svg width="50" height="50" viewBox="0 0 50 50"><ellipse cx="24.700" cy="43.900" rx="14.200" ry="7.300" fill="#14b1b6"/><path d="M18.400 36.200l2.300 6.500 4-2.900 4 2.900 2.300-6.500-2.600-1.700h-7.400z" fill="#e4f6f8"/><circle cx="24.700" cy="24" r="11.500" fill="#fdfefe"/><path d="M12.800 24.300c0-7.300 5.300-12.700 11.900-12.700s11.900 5.400 11.900 12.700c-5.500.3-11-.6-13.800-4.100-2.200 2.700-6 4.100-10 4.100z" fill="#f03f35"/><path d="M12.800 24.300c0-7.300 5.300-12.700 11.900-12.700-1.800 2.800-2.400 5.700-1.900 8.600-2.200 2.700-6 4.100-10 4.100z" fill="#f16a6c"/></svg></div><div class="nm">米其林厨师</div><div class="stt"><svg width="12" height="10" style="position:absolute;left:0;top:2.500px"><path d="M0.600 5c1.500-2.700 3.300-4 5.400-4s3.900 1.300 5.400 4c-1.500 2.700-3.300 4-5.400 4s-3.900-1.300-5.400-4z" fill="none" stroke="#b9bdc2" stroke-width="1.100" stroke-linejoin="round"/><circle cx="6" cy="5" r="2.600" fill="none" stroke="#b9bdc2" stroke-width="1.100" stroke-linejoin="round"/><circle cx="6" cy="5.200" r="1" fill="none" stroke="#b9bdc2" stroke-width="1.100" stroke-linejoin="round"/></svg><span style="position:absolute;left:14.500px;top:0">0</span><svg width="12" height="11" style="position:absolute;left:30.500px;top:2px"><path d="M0.600 0.600h10.200v7h-6.800l-2.200 2.400v-2.400h-1.200z" fill="none" stroke="#b9bdc2" stroke-width="1.100" stroke-linejoin="round"/><path d="M3 3.200h5.400M3 5h3.200" fill="none" stroke="#b9bdc2" stroke-width="1.100" stroke-linejoin="round"/></svg><span style="position:absolute;left:44px;top:0">0</span></div></div>
<div class="card" style="left:12px;top:540px"><div class="av"><svg width="50" height="50" viewBox="0 0 50 50"><ellipse cx="24.700" cy="43.900" rx="14.200" ry="7.300" fill="#14b1b6"/><path d="M18.400 36.200l2.300 6.500 4-2.900 4 2.900 2.300-6.500-2.600-1.700h-7.400z" fill="#e4f6f8"/><circle cx="24.700" cy="24" r="11.500" fill="#fdfefe"/><path d="M12.800 24.300c0-7.300 5.300-12.700 11.900-12.700s11.900 5.400 11.900 12.700c-5.500.3-11-.6-13.800-4.100-2.200 2.700-6 4.100-10 4.100z" fill="#f03f35"/><path d="M12.800 24.300c0-7.300 5.300-12.700 11.900-12.700-1.800 2.800-2.400 5.700-1.900 8.600-2.200 2.700-6 4.100-10 4.100z" fill="#f16a6c"/></svg></div><div class="nm">健身教练</div><div class="stt"><svg width="12" height="10" style="position:absolute;left:0;top:2.500px"><path d="M0.600 5c1.500-2.700 3.300-4 5.400-4s3.900 1.300 5.400 4c-1.500 2.700-3.300 4-5.400 4s-3.900-1.300-5.400-4z" fill="none" stroke="#b9bdc2" stroke-width="1.100" stroke-linejoin="round"/><circle cx="6" cy="5" r="2.600" fill="none" stroke="#b9bdc2" stroke-width="1.100" stroke-linejoin="round"/><circle cx="6" cy="5.200" r="1" fill="none" stroke="#b9bdc2" stroke-width="1.100" stroke-linejoin="round"/></svg><span style="position:absolute;left:14.500px;top:0">0</span><svg width="12" height="11" style="position:absolute;left:30.500px;top:2px"><path d="M0.600 0.600h10.200v7h-6.800l-2.200 2.400v-2.400h-1.200z" fill="none" stroke="#b9bdc2" stroke-width="1.100" stroke-linejoin="round"/><path d="M3 3.200h5.400M3 5h3.200" fill="none" stroke="#b9bdc2" stroke-width="1.100" stroke-linejoin="round"/></svg><span style="position:absolute;left:44px;top:0">0</span></div></div>
<div class="card" style="left:199px;top:540px"><div class="av"><svg width="50" height="50" viewBox="0 0 50 50"><ellipse cx="24.700" cy="43.900" rx="14.200" ry="7.300" fill="#14b1b6"/><path d="M18.400 36.200l2.300 6.500 4-2.900 4 2.900 2.300-6.500-2.600-1.700h-7.400z" fill="#e4f6f8"/><circle cx="24.700" cy="24" r="11.500" fill="#fdfefe"/><path d="M12.800 24.300c0-7.300 5.300-12.700 11.900-12.700s11.900 5.400 11.900 12.700c-5.500.3-11-.6-13.800-4.100-2.200 2.700-6 4.100-10 4.100z" fill="#f03f35"/><path d="M12.800 24.300c0-7.300 5.300-12.700 11.900-12.700-1.800 2.800-2.400 5.700-1.900 8.600-2.200 2.700-6 4.100-10 4.100z" fill="#f16a6c"/></svg></div><div class="nm">游泳教练</div><div class="stt"><svg width="12" height="10" style="position:absolute;left:0;top:2.500px"><path d="M0.600 5c1.500-2.700 3.300-4 5.400-4s3.900 1.300 5.400 4c-1.500 2.700-3.300 4-5.400 4s-3.900-1.300-5.400-4z" fill="none" stroke="#b9bdc2" stroke-width="1.100" stroke-linejoin="round"/><circle cx="6" cy="5" r="2.600" fill="none" stroke="#b9bdc2" stroke-width="1.100" stroke-linejoin="round"/><circle cx="6" cy="5.200" r="1" fill="none" stroke="#b9bdc2" stroke-width="1.100" stroke-linejoin="round"/></svg><span style="position:absolute;left:14.500px;top:0">0</span><svg width="12" height="11" style="position:absolute;left:30.500px;top:2px"><path d="M0.600 0.600h10.200v7h-6.800l-2.200 2.400v-2.400h-1.200z" fill="none" stroke="#b9bdc2" stroke-width="1.100" stroke-linejoin="round"/><path d="M3 3.200h5.400M3 5h3.200" fill="none" stroke="#b9bdc2" stroke-width="1.100" stroke-linejoin="round"/></svg><span style="position:absolute;left:44px;top:0">0</span></div></div>
<div class="st" style="top:639px">历史名人</div>
</div>
<div id="tabbar" class="abs">
<svg width="28" height="26" style="position:absolute;left:34.75px;top:8px"><path d="M11 9h11.500a1.500 1.500 0 0 1 1.500 1.500v9a1.500 1.500 0 0 1-1.500 1.500v3l-3.500-3h-8z" fill="#c9c9c9"/><path d="M4.500 3h12a1.500 1.500 0 0 1 1.500 1.500v9.500a1.500 1.500 0 0 1-1.500 1.500h-7l-3.500 3v-3h-1.500a1.500 1.500 0 0 1-1.500-1.500v-9.500a1.500 1.500 0 0 1 1.500-1.500z" fill="#6e6e6e"/></svg>
<div class="tbl" style="left:18.75px;color:#7a7a7a">对话</div>
<svg width="28" height="26" style="position:absolute;left:132.25px;top:8px"><path d="M23.500 2.500c-7 0-14 3-16 9.500-0.800 2.600-0.300 4.800 0.300 6.200 2-5 6-9 11-12-4 3.500-8 8-10 13 5 0.500 9-1.500 11.500-5.500l-4 0.300c3-1 5-2.500 6-5l-3 0.300c2-1.500 3.500-3.800 4.200-6.800z" fill="#6e6e6e"/><path d="M5 23.500l3.500-6" stroke="#6e6e6e" stroke-width="1.500" stroke-linecap="round"/></svg>
<div class="tbl" style="left:116.25px;color:#7a7a7a">创作</div>
<svg width="28" height="28" style="position:absolute;left:229.75px;top:7px"><circle cx="15.300" cy="12" r="9.400" fill="#1fb8c3"/><path d="M8 7.500l-1.800 6.300-1.700 2.300 1.500.9v2.300l.8.700-.3 1.200c.3 1.200 1.600 1.600 3.600 1.200l.4 3.600h7.500l-.5-6z" fill="#1fb8c3"/><path d="M6.300 9.800c3.200-1.500 6.400-.3 8.300 3.200 1.600 3 2.800 6.500 6.800 8.300" fill="none" stroke="#fff" stroke-width="1.300" stroke-linecap="round"/></svg>
<div class="tbl" style="left:213.75px;color:#1fb8c3">模拟</div>
<svg width="28" height="28" style="position:absolute;left:327.25px;top:6px"><circle cx="14" cy="8.500" r="5.300" fill="#6e6e6e"/><ellipse cx="14" cy="20" rx="9.800" ry="4.800" fill="#6e6e6e"/></svg>
<div class="tbl" style="left:311.25px;color:#7a7a7a">我的</div>
<div class="abs" style="left:136px;top:76px;width:117px;height:5px;border-radius:3px;background:#111"></div>
</div></div>
<div id="actbar" class="abs"><svg width="200" height="30" style="position:absolute;left:0;top:0"><path d="M12.500 8.500h5l3 3v6.500h-8z M12.500 11.500h-3.500v10.500h7.500v-4" fill="none" stroke="#f3f0c8" stroke-width="1.400" stroke-linejoin="round"/><path d="M17.500 8.500v3h3" fill="none" stroke="#f3f0c8" stroke-width="1.400" stroke-linejoin="round"/><circle cx="49.500" cy="13" r="4.500" fill="none" stroke="#8c8c8c" stroke-width="1.200" stroke-linecap="round" stroke-linejoin="round"/><path d="M46.300 16.200l-4.800 5.300" fill="none" stroke="#8c8c8c" stroke-width="1.200" stroke-linecap="round" stroke-linejoin="round"/><circle cx="76" cy="9.500" r="1.800" fill="none" stroke="#8c8c8c" stroke-width="1.200" stroke-linecap="round" stroke-linejoin="round"/><circle cx="76" cy="20.500" r="1.800" fill="none" stroke="#8c8c8c" stroke-width="1.200" stroke-linecap="round" stroke-linejoin="round"/><circle cx="83" cy="12" r="1.800" fill="none" stroke="#8c8c8c" stroke-width="1.200" stroke-linecap="round" stroke-linejoin="round"/><path d="M76 11.300v7.400M83 13.800c0 3-7 2-7 5" fill="none" stroke="#8c8c8c" stroke-width="1.200" stroke-linecap="round" stroke-linejoin="round"/><path d="M104.500 10.500h6v6h-6z M104.500 16.500h6v6h-6z M110.500 16.500h6v6h-6z M113 7.500h6v6h-6z" fill="none" stroke="#8c8c8c" stroke-width="1.200" stroke-linecap="round" stroke-linejoin="round"/><rect x="138.500" y="9.500" width="13" height="13" rx="1" fill="none" stroke="#8c8c8c" stroke-width="1.200" stroke-linecap="round" stroke-linejoin="round"/><path d="M138.500 14.500h7.500a1.500 1.500 0 0 0 1.500-1.500v-3.500M151.500 18h-7.500a1.500 1.500 0 0 0-1.500 1.500v3" fill="none" stroke="#8c8c8c" stroke-width="1.200" stroke-linecap="round" stroke-linejoin="round"/><path d="M167.500 15.500h13.500c1.300-1.500 2.300-1.500 3.300-1-1 .4-1.600 1.200-2 2.300-1 3.300-3.800 4.700-7.800 4.700s-6.500-2.200-7-6z M169.500 13h2.200v2h-2.200z M172.200 13h2.200v2h-2.200z M174.900 13h2.200v2h-2.200z M172.200 10.500h2.200v2h-2.200z M174.900 10.500h2.200v2h-2.200z" fill="#8c8c8c"/></svg></div>
<div id="explorer" class="abs">
<div class="abs nw" style="left:20px;top:11px;font-size:11px;line-height:14px;color:#bbbbbb">资源管理器</div>
<div class="abs" style="left:166px;top:15.5px;width:14px;height:3px"><svg width="14" height="3"><circle cx="1.500" cy="1.500" r="1.100" fill="#ccc"/><circle cx="6.800" cy="1.500" r="1.100" fill="#ccc"/><circle cx="12.100" cy="1.500" r="1.100" fill="#ccc"/></svg></div>
<div class="sec" style="top:35px"><svg width="6" height="8" style="position:absolute;left:7px;top:7px"><path d="M0.500 0.500l4.500 3.500-4.500 3.500z" fill="#c5c5c5"/></svg><span class="abs" style="left:20px">打开的编辑器</span></div>
<div class="sec" style="top:57px"><svg width="8" height="6" style="position:absolute;left:6px;top:8px"><path d="M0.500 0.500h7l-3.500 4.500z" fill="#c5c5c5"/></svg><span class="abs" style="left:20px">WXAPP</span></div>
<div class="row" style="top:79px"><svg width="6" height="8" style="position:absolute;left:20px;top:7px"><path d="M0.500 0.500l4.500 3.500-4.500 3.500z" fill="#c5c5c5"/></svg><span class="ic" style="left:34px"><svg width="16" height="16"><path d="M1 3.500a1 1 0 0 1 1-1h4l1.500 1.500h6.500a1 1 0 0 1 1 1v7.500a1 1 0 0 1-1 1h-12a1 1 0 0 1-1-1z" fill="#90a4ae"/></svg></span><span class="lb">@babel</span></div>
<div class="row" style="top:101px"><svg width="6" height="8" style="position:absolute;left:20px;top:7px"><path d="M0.500 0.500l4.500 3.500-4.500 3.500z" fill="#c5c5c5"/></svg><span class="ic" style="left:34px"><svg width="16" height="16"><path d="M1 3.500a1 1 0 0 1 1-1h4l1.500 1.500h6.500a1 1 0 0 1 1 1v7.500a1 1 0 0 1-1 1h-12a1 1 0 0 1-1-1z" fill="#c0ca33"/><path d="M9 8h2.500v2.500h-2.500zM12 8h2.500v2.500h-2.500zM9 11h2.500v2.500h-2.500zM12 11h2.500v2.500h-2.500z" fill="#f0f4c3"/></svg></span><span class="lb">components</span></div>
<div class="row" style="top:123px"><svg width="6" height="8" style="position:absolute;left:20px;top:7px"><path d="M0.500 0.500l4.500 3.500-4.500 3.500z" fill="#c5c5c5"/></svg><span class="ic" style="left:34px"><svg width="16" height="16"><path d="M1 3.500a1 1 0 0 1 1-1h4l1.500 1.500h6.500a1 1 0 0 1 1 1v7.500a1 1 0 0 1-1 1h-12a1 1 0 0 1-1-1z" fill="#90a4ae"/></svg></span><span class="lb">custom-tab-bar</span></div>
<div class="row" style="top:145px"><svg width="6" height="8" style="position:absolute;left:20px;top:7px"><path d="M0.500 0.500l4.500 3.500-4.500 3.500z" fill="#c5c5c5"/></svg><span class="ic" style="left:34px"><svg width="16" height="16"><path d="M1 3.500a1 1 0 0 1 1-1h4l1.500 1.500h6.500a1 1 0 0 1 1 1v7.500a1 1 0 0 1-1 1h-12a1 1 0 0 1-1-1z" fill="#26a69a"/><rect x="8.500" y="7" width="7" height="7.500" rx="1" fill="#b2dfdb"/><path d="M9.500 13l2-2.500 1.500 1.500 1-1 1 2z" fill="#26a69a"/><circle cx="11" cy="9" r=".8" fill="#26a69a"/></svg></span><span class="lb">images</span></div>
<div class="row" style="top:167px"><svg width="6" height="8" style="position:absolute;left:20px;top:7px"><path d="M0.500 0.500l4.500 3.500-4.500 3.500z" fill="#c5c5c5"/></svg><span class="ic" style="left:34px"><svg width="16" height="16"><path d="M1 3.500a1 1 0 0 1 1-1h4l1.500 1.500h6.500a1 1 0 0 1 1 1v7.500a1 1 0 0 1-1 1h-12a1 1 0 0 1-1-1z" fill="#90a4ae"/></svg></span><span class="lb">miniprogram_npm</span></div>
<div class="row" style="top:189px"><svg width="6" height="8" style="position:absolute;left:20px;top:7px"><path d="M0.500 0.500l4.500 3.500-4.500 3.500z" fill="#c5c5c5"/></svg><span class="ic" style="left:34px"><svg width="16" height="16"><path d="M1 3.500a1 1 0 0 1 1-1h4l1.500 1.500h6.500a1 1 0 0 1 1 1v7.500a1 1 0 0 1-1 1h-12a1 1 0 0 1-1-1z" fill="#8bc34a"/><path d="M12 7.500l3.300 1.900v3.700l-3.300 1.900-3.300-1.900v-3.700z" fill="#dcedc8"/></svg></span><span class="lb">node_modules</span></div>
<div class="row" style="top:211px"><svg width="6" height="8" style="position:absolute;left:20px;top:7px"><path d="M0.500 0.500l4.500 3.500-4.500 3.500z" fill="#c5c5c5"/></svg><span class="ic" style="left:34px"><svg width="16" height="16"><path d="M1 3.500a1 1 0 0 1 1-1h4l1.500 1.500h6.500a1 1 0 0 1 1 1v7.500a1 1 0 0 1-1 1h-12a1 1 0 0 1-1-1z" fill="#ff7043"/><rect x="8.500" y="7.500" width="7" height="6.500" rx="1" fill="#ffccbc"/><path d="M11 9.500l-1.300 1.300 1.300 1.300M13 9.500l1.300 1.300-1.300 1.300" stroke="#ff7043" stroke-width=".8" fill="none"/></svg></span><span class="lb">pages</span></div>
<div class="row" style="top:233px"><svg width="6" height="8" style="position:absolute;left:20px;top:7px"><path d="M0.500 0.500l4.500 3.500-4.500 3.500z" fill="#c5c5c5"/></svg><span class="ic" style="left:34px"><svg width="16" height="16"><path d="M1 3.500a1 1 0 0 1 1-1h4l1.500 1.500h6.500a1 1 0 0 1 1 1v7.500a1 1 0 0 1-1 1h-12a1 1 0 0 1-1-1z" fill="#90a4ae"/></svg></span><span class="lb">towxml</span></div>
<div class="row" style="top:255px"><svg width="6" height="8" style="position:absolute;left:20px;top:7px"><path d="M0.500 0.500l4.500 3.500-4.500 3.500z" fill="#c5c5c5"/></svg><span class="ic" style="left:34px"><svg width="16" height="16"><path d="M1 3.500a1 1 0 0 1 1-1h4l1.500 1.500h6.500a1 1 0 0 1 1 1v7.500a1 1 0 0 1-1 1h-12a1 1 0 0 1-1-1z" fill="#7cb342"/><rect x="8.500" y="7.500" width="7" height="7" rx="1" fill="#dcedc8"/><path d="M12 9v4M10 11h4" stroke="#7cb342" stroke-width="1.100"/></svg></span><span class="lb">utils</span></div>
<div class="row" style="top:277px"><span class="ic" style="left:34px"><svg width="16" height="16"><rect x="2" y="2" width="12" height="12" fill="#f5c32c"/><text x="13.300" y="12.800" font-family="Liberation Sans" font-size="6.500" font-weight="bold" text-anchor="end" fill="#4a3c0a">JS</text></svg></span><span class="lb">app.js</span></div>
<div class="row" style="top:299px"><span class="ic" style="left:34px"><svg width="18" height="16"><path d="M5 2.500c-2 0-2.300.8-2.300 2v1.700c0 1-.5 1.600-1.500 1.800 1 .2 1.500.8 1.500 1.800v1.700c0 1.200.3 2 2.300 2M13 2.500c2 0 2.300.8 2.300 2v1.700c0 1 .5 1.600 1.500 1.800-1 .2-1.500.8-1.500 1.800v1.700c0 1.200-.3 2-2.300 2" fill="none" stroke="#f2b53a" stroke-width="1.300" stroke-linecap="round"/><circle cx="6.700" cy="10.500" r=".75" fill="#f2b53a"/><circle cx="9" cy="10.500" r=".75" fill="#f2b53a"/><circle cx="11.300" cy="10.500" r=".75" fill="#f2b53a"/></svg></span><span class="lb">app.json</span></div>
<div class="row" style="top:321px"><span class="ic" style="left:34px"><svg width="16" height="16"><path d="M3 2h11.500l-1.200 10-4.600 2-4.500-2-.3-2.500h2.200l.2 1.200 2.500.9 2.500-.9.300-2.500h-8l.3-2.200h8l.2-1.800h-9.400z" fill="#42a5f5"/></svg></span><span class="lb">app.wxss</span></div>
<div class="row" style="top:343px"><span class="ic" style="left:34px"><svg width="16" height="16"><path d="M8 1.500l5.700 3.300v6.500l-5.700 3.300-5.700-3.300v-6.500z" fill="none" stroke="#7cb342" stroke-width="1.200"/><text x="8.200" y="10.300" font-family="Liberation Sans" font-size="5.500" font-weight="bold" text-anchor="middle" fill="#7cb342">JS</text></svg></span><span class="lb">package-lock.json</span></div>
<div class="row" style="top:365px"><span class="ic" style="left:34px"><svg width="16" height="16"><path d="M8 1.500l5.700 3.300v6.500l-5.700 3.300-5.700-3.300v-6.500z" fill="none" stroke="#7cb342" stroke-width="1.200"/><text x="8.200" y="10.300" font-family="Liberation Sans" font-size="5.500" font-weight="bold" text-anchor="middle" fill="#7cb342">JS</text></svg></span><span class="lb">package.json</span></div>
<div class="row" style="top:387px"><span class="ic" style="left:34px"><svg width="18" height="16"><path d="M5 2.500c-2 0-2.300.8-2.300 2v1.700c0 1-.5 1.600-1.500 1.800 1 .2 1.500.8 1.500 1.800v1.700c0 1.200.3 2 2.300 2M13 2.500c2 0 2.300.8 2.300 2v1.700c0 1 .5 1.600 1.500 1.800-1 .2-1.500.8-1.500 1.800v1.700c0 1.200-.3 2-2.300 2" fill="none" stroke="#f2b53a" stroke-width="1.300" stroke-linecap="round"/><circle cx="6.700" cy="10.500" r=".75" fill="#f2b53a"/><circle cx="9" cy="10.500" r=".75" fill="#f2b53a"/><circle cx="11.300" cy="10.500" r=".75" fill="#f2b53a"/></svg></span><span class="lb">project.config.json</span></div>
<div class="row" style="top:409px"><span class="ic" style="left:34px"><svg width="18" height="16"><path d="M5 2.500c-2 0-2.300.8-2.300 2v1.700c0 1-.5 1.600-1.500 1.800 1 .2 1.500.8 1.500 1.800v1.700c0 1.200.3 2 2.300 2M13 2.500c2 0 2.300.8 2.300 2v1.700c0 1 .5 1.600 1.500 1.800-1 .2-1.500.8-1.500 1.800v1.700c0 1.200-.3 2-2.300 2" fill="none" stroke="#f2b53a" stroke-width="1.300" stroke-linecap="round"/><circle cx="6.700" cy="10.500" r=".75" fill="#f2b53a"/><circle cx="9" cy="10.500" r=".75" fill="#f2b53a"/><circle cx="11.300" cy="10.500" r=".75" fill="#f2b53a"/></svg></span><span class="lb">project.private.config.js...</span></div>
<div class="row" style="top:431px"><span class="ic" style="left:34px"><svg width="16" height="16"><rect x="2" y="2" width="12" height="12" fill="#f5c32c"/><text x="13.300" y="12.800" font-family="Liberation Sans" font-size="6.500" font-weight="bold" text-anchor="end" fill="#4a3c0a">JS</text></svg></span><span class="lb">siteinfo.js</span></div>
<div class="abs" style="left:0;top:901px;width:199px;height:18px;background:#383838;font-size:11px;font-weight:bold;line-height:23px;color:#ccc;overflow:hidden"><svg width="6" height="8" style="position:absolute;left:7px;top:8px"><path d="M0.500 0.500l4.500 3.500-4.500 3.500z" fill="#c5c5c5"/></svg><span class="abs" style="left:20px">大纲</span></div>
</div>
<div class="abs" style="left:675px;top:92px;width:1px;height:948px;background:#262626"></div>
<div id="edtabs" class="abs">
<div class="tab" style="left:0;width:119px"><span class="abs" style="left:10px;top:7px"><svg width="16" height="16"><rect x="2" y="2" width="12" height="12" fill="#f5c32c"/><text x="13.300" y="12.800" font-family="Liberation Sans" font-size="6.500" font-weight="bold" text-anchor="end" fill="#4a3c0a">JS</text></svg></span><span class="abs" style="left:32px">siteinfo.js</span></div>
<div class="tab" style="left:119px;width:167px"><span class="abs" style="left:10px;top:8px"><svg width="18" height="16"><path d="M5 2.500c-2 0-2.300.8-2.300 2v1.700c0 1-.5 1.600-1.500 1.800 1 .2 1.500.8 1.500 1.800v1.700c0 1.200.3 2 2.300 2M13 2.500c2 0 2.300.8 2.300 2v1.700c0 1 .5 1.600 1.500 1.800-1 .2-1.500.8-1.500 1.800v1.700c0 1.200-.3 2-2.300 2" fill="none" stroke="#f2b53a" stroke-width="1.300" stroke-linecap="round"/><circle cx="6.700" cy="10.500" r=".75" fill="#f2b53a"/><circle cx="9" cy="10.500" r=".75" fill="#f2b53a"/><circle cx="11.300" cy="10.500" r=".75" fill="#f2b53a"/></svg></span><span class="abs" style="left:33px">project.config.json</span></div>
<div class="tab act" style="left:286px;width:209px"><span class="abs" style="left:10px;top:8px"><svg width="18" height="16"><path d="M5 2.500c-2 0-2.300.8-2.300 2v1.700c0 1-.5 1.600-1.500 1.800 1 .2 1.500.8 1.500 1.800v1.700c0 1.200.3 2 2.300 2M13 2.500c2 0 2.300.8 2.300 2v1.700c0 1 .5 1.600 1.500 1.800-1 .2-1.500.8-1.500 1.800v1.700c0 1.200-.3 2-2.300 2" fill="none" stroke="#f2b53a" stroke-width="1.300" stroke-linecap="round"/><circle cx="6.700" cy="10.500" r=".75" fill="#f2b53a"/><circle cx="9" cy="10.500" r=".75" fill="#f2b53a"/><circle cx="11.300" cy="10.500" r=".75" fill="#f2b53a"/></svg></span><span class="abs" style="left:32px">project.private.config.json</span><svg width="11" height="11" style="position:absolute;left:186px;top:10px"><path d="M1 1l9 9M10 1l-9 9" stroke="#e8e8e8" stroke-width="1.300"/></svg></div>
<div class="tab" style="left:495px;width:120px;border-right:none"><span class="abs" style="left:11px;top:8px"><svg width="16" height="16"><path d="M8 1.500l5.700 3.300v6.500l-5.700 3.300-5.700-3.300v-6.500z" fill="none" stroke="#7cb342" stroke-width="1.200"/><text x="8.200" y="10.300" font-family="Liberation Sans" font-size="5.500" font-weight="bold" text-anchor="middle" fill="#7cb342">JS</text></svg></span><span class="abs" style="left:32px">package.json</span></div>
<svg width="100" height="30" style="position:absolute;left:617px;top:0"><path d="M6.500 8.500h5l3 3v9.500h-9v-6 M11.500 8.500v3h3" fill="none" stroke="#d0d0d0" stroke-width="1.200" stroke-linejoin="round" stroke-linecap="round"/><path d="M6.500 13.500v-2a2 2 0 0 0-4 0" fill="none" stroke="#d0d0d0" stroke-width="1.200" stroke-linejoin="round" stroke-linecap="round"/><path d="M1 11.500l1.500 1.700 1.500-1.700" fill="none" stroke="#d0d0d0" stroke-width="1.200" stroke-linejoin="round" stroke-linecap="round"/><rect x="35.500" y="9.500" width="11" height="11" fill="none" stroke="#d0d0d0" stroke-width="1.200" stroke-linejoin="round" stroke-linecap="round"/><path d="M41.500 9.500v11" fill="none" stroke="#d0d0d0" stroke-width="1.200" stroke-linejoin="round" stroke-linecap="round"/><circle cx="67.500" cy="15" r="1.100" fill="#d0d0d0"/><circle cx="73" cy="15" r="1.100" fill="#d0d0d0"/><circle cx="78.500" cy="15" r="1.100" fill="#d0d0d0"/></svg>
</div>
<div id="crumbs" class="abs"><svg width="120" height="22" style="position:absolute;left:0;top:0"><path d="M10.500 6.500h10.500M10.500 9.500h10.500M10.500 12.500h10.500M10.500 15.500h10.500M7.500 6.500h.5M7.500 9.500h.5M7.500 12.500h.5M7.500 15.500h.5" fill="none" stroke="#a8a8a8" stroke-width="1"/><path d="M40.500 5.500h9v11.500l-4.500-3.500-4.500 3.500z" fill="none" stroke="#a8a8a8" stroke-width="1.200" stroke-linejoin="round" stroke-linecap="round"/><path d="M80.500 11.500h-11M74 7l-4.500 4.500 4.500 4.500" fill="none" stroke="#a8a8a8" stroke-width="1.200" stroke-linejoin="round" stroke-linecap="round"/><path d="M97.500 11.500h11M104 7l4.500 4.500-4.500 4.500" fill="none" stroke="#5a5a5a" stroke-width="1.200" stroke-linejoin="round" stroke-linecap="round"/></svg>
<span class="abs" style="left:125px;top:4px"><svg width="18" height="16"><path d="M5 2.500c-2 0-2.300.8-2.300 2v1.700c0 1-.5 1.600-1.500 1.800 1 .2 1.500.8 1.500 1.800v1.700c0 1.200.3 2 2.300 2M13 2.500c2 0 2.300.8 2.300 2v1.700c0 1 .5 1.600 1.500 1.800-1 .2-1.500.8-1.500 1.800v1.700c0 1.200-.3 2-2.300 2" fill="none" stroke="#f2b53a" stroke-width="1.300" stroke-linecap="round"/><circle cx="6.700" cy="10.500" r=".75" fill="#f2b53a"/><circle cx="9" cy="10.500" r=".75" fill="#f2b53a"/><circle cx="11.300" cy="10.500" r=".75" fill="#f2b53a"/></svg></span><span class="abs nw" style="left:148px;top:0;font-size:13px;line-height:24px;color:#a9a9a9">project.private.config.json</span>
<svg width="8" height="11" style="position:absolute;left:299px;top:6px"><path d="M1.500 1l4.500 4.500-4.500 4.500" fill="none" stroke="#a0a0a0" stroke-width="1.200"/></svg>
<svg width="16" height="12" style="position:absolute;left:312px;top:5px"><rect x=".6" y=".6" width="14.800" height="10.800" rx="1" fill="none" stroke="#a8a8a8" stroke-width="1.100"/><path d="M3 7.500h2.500M6.500 7.500h2.500M10 7.500h2.500M3.500 5.500h1.500M7 5.500h1.500M10.500 5.500h1.500" stroke="#a8a8a8" stroke-width="1"/></svg>
<span class="abs nw" style="left:333px;top:0;font-size:13px;line-height:24px;color:#a9a9a9">libVersion</span>
</div>
<div id="code" class="abs">
<div class="abs" style="left:53px;top:101px;width:664px;height:32px;background:#464646"></div>
<div class="abs" style="left:195px;top:101px;width:68px;height:32px;background:#3e4750"></div>
<div class="abs" style="left:52px;top:0;width:1px;height:134px;background:#c29a3a"></div>
<div class="abs" style="left:70px;top:5px;width:1px;height:64px;background:#444"></div>
<div class="abs" style="left:52px;top:133px;width:9px;height:32px;border:1px solid #8a8560"></div>
<div class="ln" style="top:6px;">5</div><div class="cl" style="top:6px;left:52.3px">    <span class="k">"compileHotReLoad"</span><span class="p">:</span> <span class="s">true</span><span class="p">,</span></div>
<div class="ln" style="top:38px;">6</div><div class="cl" style="top:38px;left:52.3px">    <span class="k">"urlCheck"</span><span class="p">:</span> <span class="s">false</span></div>
<div class="ln" style="top:70px;">7</div><div class="cl" style="top:70px;left:52.3px">  <span class="b2">}</span><span class="p">,</span></div>
<div class="ln" style="top:102px;color:#d0d0d0">8</div><div class="cl" style="top:102px;left:52.3px">  <span style="color:#d4d4d4">"libVersion"</span><span style="color:#d4d4d4">:</span> <span class="p">"</span><span class="s">3.7.10</span><span class="p">"</span></div>
<div class="ln" style="top:134px;">9</div><div class="cl" style="top:134px;left:52.3px"><span class="b1">}</span></div>
<div class="abs" style="left:0;top:0;width:717px;height:5px;background:linear-gradient(180deg,rgba(0,0,0,.35),rgba(0,0,0,0))"></div>
<div class="abs" style="left:702px;top:0;width:1px;height:168px;background:#3d3d3d"></div>
<div class="abs" style="left:703px;top:65px;width:13px;height:57px;background:rgba(121,121,121,.4)"></div>
<div class="abs" style="left:703px;top:98px;width:13px;height:2px;background:#9a9a9a"></div><div class="abs" style="left:707px;top:100px;width:5.500px;height:10px;background:#9a9a9a"></div>
</div>
<div id="panelbg" class="abs"></div><div id="panel" class="abs">
<div class="ptab" style="left:19px;color:#e7e7e7">构建</div><div class="abs" style="left:19px;top:29px;width:24px;height:1px;background:#e7e7e7"></div>
<div class="badge" style="left:51px;width:26px">212</div>
<div class="ptab" style="left:97px">调试器</div><div class="badge" style="left:138px;width:22px">39</div>
<div class="ptab" style="left:180px">问题</div><div class="ptab" style="left:222px">输出</div><div class="ptab" style="left:264px">终端</div><div class="ptab" style="left:306px">代码质量</div>
<svg width="60" height="20" style="position:absolute;left:645px;top:9px"><path d="M7 13l5-5 5 5" fill="none" stroke="#c8c8c8" stroke-width="1.300"/><path d="M40 6l9 9M49 6l-9 9" stroke="#c8c8c8" stroke-width="1.300"/></svg>
<div class="abs" style="left:0;top:34px;width:717px;height:675px;overflow:hidden">
<div class="abs nw" style="left:40px;top:16.5px;font-size:17px;line-height:24px;color:#ececec">构建输出</div>
<div class="log" style="top:53px;letter-spacing:0.059px">$: 正在编译代码</div>
<div class="log" style="top:71px;letter-spacing:-0.168px">$: analyzing codes...</div>
<div class="log" style="top:89px;letter-spacing:0.002px">$: ignoring files: @babel/runtime/helpers/arrayWithHoles.js,@babel/runtime/helpers/assertThisInitialized.js,@</div>
<div class="log" style="top:107px;letter-spacing:-0.027px">babel/runtime/helpers/classCallCheck.js,@babel/runtime/helpers/createClass.js,@babel/runtime/helpers/creat</div>
<div class="log" style="top:125px;letter-spacing:0.055px">eSuper.js,@babel/runtime/helpers/getPrototypeOf.js,@babel/runtime/helpers/inherits.js,@babel/runtime/help</div>
<div class="log" style="top:143px;letter-spacing:0.022px">ers/isNativeReflectConstruct.js,@babel/runtime/helpers/iterableToArrayLimit.js,@babel/runtime/helpers/nonIt</div>
<div class="log" style="top:161px;letter-spacing:-0.008px">erableRest.js,@babel/runtime/helpers/possibleConstructorReturn.js,@babel/runtime/helpers/setPrototypeOf.j</div>
<div class="log" style="top:179px;letter-spacing:-0.015px">s,@babel/runtime/helpers/slicedToArray.js,components/message/text.js,components/message/text.json,comp</div>
<div class="log" style="top:197px;letter-spacing:-0.004px">onents/message/text.wxml,components/message/text.wxss,components/welcome/index.js,components/welco</div>
<div class="log" style="top:215px;letter-spacing:0.046px">me/index.json,components/welcome/index.wxml,components/welcome/index.wxss,miniprogram_npm/highlig</div>
<div class="log" style="top:233px;letter-spacing:-0.022px">ht.js/index.js,miniprogram_npm/regenerator-runtime/index.js,package-lock.json,package.json,project.private.c</div>
<div class="log" style="top:251px;letter-spacing:0.024px">onfig.json,towxml/parse/parse2/entities/encode.js,towxml/parse/parse2/entities/escape.js,towxml/parse/parse</div>
<div class="log" style="top:269px;letter-spacing:0.091px">2/entities/generated/encode-html.js,towxml/parse/parse2/entities/index.js</div>
<div class="log" style="top:287px;letter-spacing:-0.203px">$: <span style="color:#22aa5e">analyzing codes success</span></div>
<div class="log o" style="top:305px;letter-spacing:-0.005px"><span style="color:#cccccc">$:</span> Ignored by code analyzer: @babel/runtime/helpers/arrayWithHoles.js,@babel/runtime/helpers/assertThisIni</div>
<div class="log o" style="top:323px;letter-spacing:-0.059px">tialized.js,@babel/runtime/helpers/classCallCheck.js,@babel/runtime/helpers/createClass.js,@babel/runtime/h</div>
<div class="log o" style="top:341px;letter-spacing:0.029px">elpers/createSuper.js,@babel/runtime/helpers/getPrototypeOf.js,@babel/runtime/helpers/inherits.js,@babel/r</div>
<div class="log o" style="top:359px;letter-spacing:0.038px">untime/helpers/isNativeReflectConstruct.js,@babel/runtime/helpers/iterableToArrayLimit.js,@babel/runtime/h</div>
<div class="log o" style="top:377px;letter-spacing:-0.009px">elpers/nonIterableRest.js,@babel/runtime/helpers/possibleConstructorReturn.js,@babel/runtime/helpers/setPr</div>
<div class="log o" style="top:395px;letter-spacing:-0.002px">ototypeOf.js,@babel/runtime/helpers/slicedToArray.js,components/message/text.js,components/message/text.</div>
<div class="log o" style="top:413px;letter-spacing:-0.025px">json,components/message/text.wxml,components/message/text.wxss,components/welcome/index.js,compone</div>
<div class="log o" style="top:431px;letter-spacing:0.023px">nts/welcome/index.json,components/welcome/index.wxml,components/welcome/index.wxss,miniprogram_np</div>
<div class="log o" style="top:449px;letter-spacing:0.019px">m/highlight.js/index.js,miniprogram_npm/regenerator-runtime/index.js,package-lock.json,package.json,projec</div>
<div class="log o" style="top:467px;letter-spacing:0.022px">t.private.config.json,towxml/parse/parse2/entities/encode.js,towxml/parse/parse2/entities/escape.js,towxml/pa</div>
<div class="log o" style="top:485px;letter-spacing:0.066px">rse/parse2/entities/generated/encode-html.js,towxml/parse/parse2/entities/index.js</div>
<div class="log" style="top:503px;letter-spacing:0.091px">$: Compile miniprogram</div>
<div class="log" style="top:521px;letter-spacing:-0.074px">$: Compile jSON files</div>
<div class="log" style="top:539px;letter-spacing:0.049px">$: Compiling @babel/runtime/helpers/Arrayincludes.js</div>
<div class="log" style="top:557px;letter-spacing:0.018px">$: Compiling @babel/runtime/helpers/arrayLikeToArray.js</div>
<div class="log" style="top:575px;letter-spacing:0.078px">$: Compiling @babel/runtime/helpers/arrayWithoutHoles.js</div>
<div class="log" style="top:593px;letter-spacing:0.108px">$: Compiling @babel/runtime/helpers/defineProperty.js</div>
<div class="log" style="top:611px;letter-spacing:0.071px">$: Compiling @babel/runtime/helpers/iterableToArray.js</div>
<div class="log" style="top:629px;letter-spacing:0.059px">$: Compiling @babel/runtime/helpers/nonIterableSpread.js</div>
<div class="log" style="top:647px;letter-spacing:0.06px">$: Compiling @babel/runtime/helpers/toConsumableArray.js</div>
<div class="log" style="top:665px;letter-spacing:0.131px">$: Compiling @babel/runtime/helpers/typeof.js</div>
</div>
<div class="abs" style="left:672px;top:52px;width:3px;height:95px;background:#484848"></div>
</div>
<div id="status" class="abs"><svg width="80" height="28" style="position:absolute;left:14px;top:0"><circle cx="8" cy="14" r="5.500" fill="none" stroke="#9d9d9d" stroke-width="1.100" stroke-linejoin="round" stroke-linecap="round"/><path d="M5.800 11.800l4.400 4.400M10.200 11.800l-4.400 4.400" fill="none" stroke="#9d9d9d" stroke-width="1.100" stroke-linejoin="round" stroke-linecap="round"/><path d="M35 8.500l5.700 10.500h-11.400z M35 12.500v3.300" fill="none" stroke="#9d9d9d" stroke-width="1.100" stroke-linejoin="round" stroke-linecap="round"/><circle cx="35" cy="17.300" r=".5" fill="#9d9d9d"/></svg>
<div class="sb" style="left:32px">0</div><div class="sb" style="left:60px">0</div>
<div class="sb" style="left:659px">行 8，列 25</div><div class="sb" style="left:737px">空格: 2</div><div class="sb" style="left:789px">UTF-8</div><div class="sb" style="left:837px">CRLF</div><div class="sb" style="left:879px">JSON</div>
</div>
</body></html>
